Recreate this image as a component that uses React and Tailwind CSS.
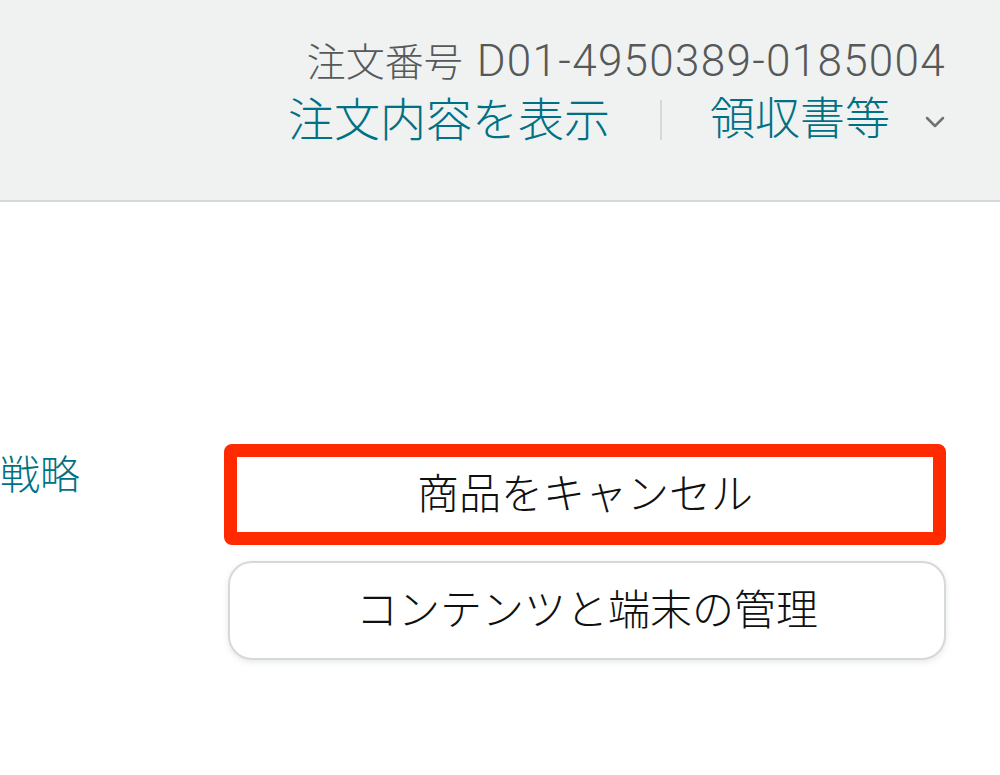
export default function App() {
  const font = { fontFamily: 'Roboto, "Noto Sans CJK JP", sans-serif' };
  return (
    <div className="w-[1000px] h-[775px] bg-white overflow-hidden font-light" style={font}>
      {/* header */}
      <div className="h-[202px] bg-[#f0f2f2] border-b-2 border-[#d5d9d9] pt-[38px] pr-[54px] flex flex-col items-end">
        <div className="text-[39px] leading-[46px] text-[#565959] flex items-baseline">
          <span>注文番号</span>
          <span className="ml-[14px] text-[44px] tracking-[1.3px]">D01-4950389-0185004</span>
        </div>
        <div className="flex items-center h-[52px] mt-[8px]">
          <span className="text-[46px] leading-[52px] text-[#007185]">注文内容を表示</span>
          <span className="w-[2px] h-[40px] bg-[#d5d9d9] ml-[50px] mr-[48px]"></span>
          <span className="text-[45px] leading-[52px] text-[#007185]">領収書等</span>
          <svg width="22" height="14" viewBox="0 0 22 14" className="ml-[34px] mt-[4px]">
            <path d="M3 3 L11 11 L19 3" fill="none" stroke="#6f7373" strokeWidth="2.5" strokeLinecap="round" strokeLinejoin="round" />
          </svg>
        </div>
      </div>

      {/* body */}
      <div className="flex pt-[242px]">
        <div className="w-[224px] pt-[6px]">
          <span className="text-[40px] leading-[52px] text-[#007185]">戦略</span>
        </div>
        <div className="flex flex-col gap-[16px]">
          <button className="w-[722px] h-[101px] border-[13px] border-[#ff2a00] rounded-[8px] bg-white flex items-center justify-center text-[42px] text-[#0f1111]">
            商品をキャンセル
          </button>
          <button className="ml-[4px] w-[718px] h-[99px] border-2 border-[#d5d9d9] rounded-[24px] bg-white shadow-[0_2px_6px_rgba(213,217,217,0.6)] flex items-center justify-center text-[42px] text-[#0f1111]">
            コンテンツと端末の管理
          </button>
        </div>
      </div>
    </div>
  );
}
